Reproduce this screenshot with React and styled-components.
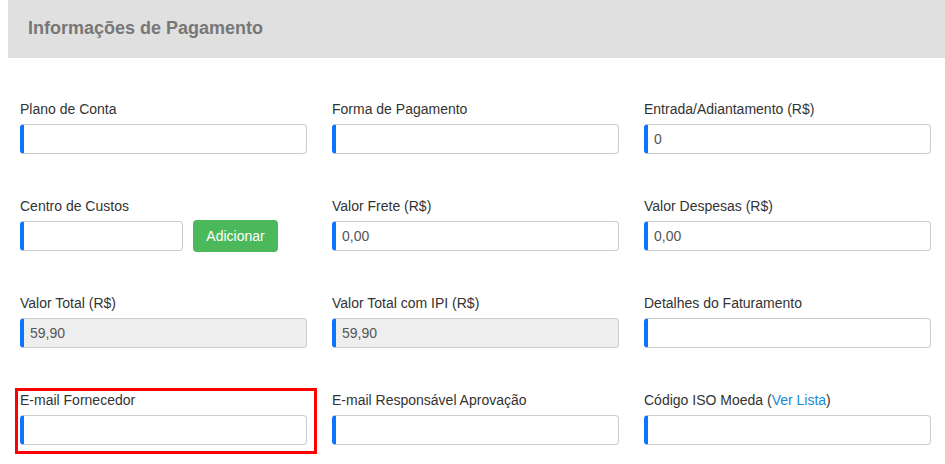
import React from 'react'
import styled, { createGlobalStyle } from 'styled-components'

const GlobalStyle = createGlobalStyle`
  body {
    margin: 0;
    background: #fff;
    font-family: "Liberation Sans", Arial, sans-serif;
    font-size: 14px;
    color: #333;
  }
`

const Page = styled.div`
  padding: 0 0 20px 8px;
`

const Header = styled.div`
  height: 58px;
  background: #e0e0e0;
  display: flex;
  align-items: center;
  padding: 0 20px 2px;
  box-sizing: border-box;
`

const Title = styled.h3`
  margin: 0;
  font-size: 18px;
  font-weight: bold;
  color: #777;
`

const Grid = styled.div`
  display: grid;
  grid-template-columns: repeat(3, 312px);
  row-gap: 42px;
  margin-top: 41px;
`

const Cell = styled.div`
  position: relative;
  padding: 0 13px 0 12px;

  ${p => p.$highlight && `
    &::after {
      content: '';
      position: absolute;
      left: 7px;
      right: 3px;
      top: -2px;
      bottom: -9px;
      border: 3px solid #f00;
      pointer-events: none;
    }
  `}
`

const Label = styled.label`
  display: block;
  line-height: 20px;
  margin-bottom: 5px;
  color: #333;
`

const Link = styled.a`
  color: #1a8ad4;
  text-decoration: none;
`

const Input = styled.input`
  display: block;
  box-sizing: border-box;
  width: ${p => p.$width || '100%'};
  height: 30px;
  padding: 0 6px;
  border: 1px solid #ccc;
  border-left: 4px solid #0a75ff;
  border-radius: 4px;
  background: ${p => (p.readOnly ? '#eee' : '#fff')};
  font-family: inherit;
  font-size: 14px;
  color: #555;
  outline: none;
`

const InlineGroup = styled.div`
  display: flex;
  align-items: center;
  gap: 10px;
  height: 30px;
`

const Button = styled.button`
  flex: none;
  height: 32px;
  width: 85px;
  border: none;
  border-radius: 4px;
  background: #4cb85c;
  color: #fff;
  font-family: inherit;
  font-size: 14px;
  cursor: pointer;
`

const Field = ({ label, value, readOnly, highlight }) => (
  <Cell $highlight={highlight}>
    <Label>{label}</Label>
    <Input defaultValue={value} readOnly={readOnly} />
  </Cell>
)

export default function App () {
  return (
    <Page>
      <GlobalStyle />
      <Header>
        <Title>Informações de Pagamento</Title>
      </Header>
      <Grid>
        <Field label='Plano de Conta' />
        <Field label='Forma de Pagamento' />
        <Field label='Entrada/Adiantamento (R$)' value='0' />

        <Cell>
          <Label>Centro de Custos</Label>
          <InlineGroup>
            <Input $width='163px' />
            <Button>Adicionar</Button>
          </InlineGroup>
        </Cell>
        <Field label='Valor Frete (R$)' value='0,00' />
        <Field label='Valor Despesas (R$)' value='0,00' />

        <Field label='Valor Total (R$)' value='59,90' readOnly />
        <Field label='Valor Total com IPI (R$)' value='59,90' readOnly />
        <Field label='Detalhes do Faturamento' />

        <Field label='E-mail Fornecedor' highlight />
        <Field label='E-mail Responsável Aprovação' />
        <Cell>
          <Label>Código ISO Moeda (<Link href='#'>Ver Lista</Link>)</Label>
          <Input />
        </Cell>
      </Grid>
    </Page>
  )
}
